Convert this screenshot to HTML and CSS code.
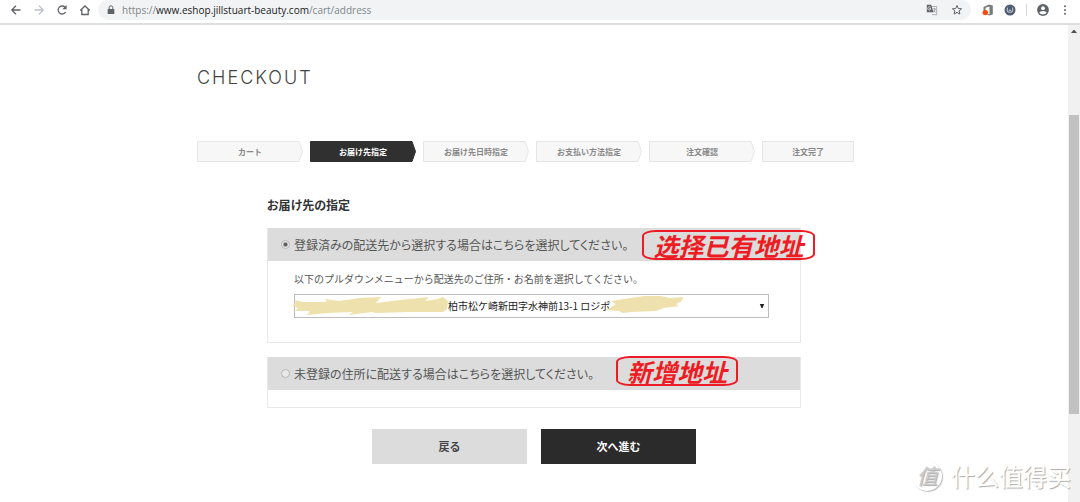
FILE: index.html
```html
<!DOCTYPE html>
<html lang="ja">
<head>
<meta charset="utf-8">
<title>CHECKOUT</title>
<link rel="stylesheet" href="styles.css">
</head>
<body>
<header class="toolbar">
  <nav class="nav-buttons">
    <button class="icon-button" type="button" aria-label="Back"><svg viewBox="0 0 12 12" width="12" height="12"><path d="M10.500 6H2M6 1.800 1.800 6 6 10.200" fill="none" stroke="#5f6368" stroke-width="1.300"/></svg></button>
    <button class="icon-button" type="button" aria-label="Forward"><svg viewBox="0 0 12 12" width="12" height="12"><path d="M1.500 6H10M6 1.800 10.200 6 6 10.200" fill="none" stroke="#bdc1c6" stroke-width="1.300"/></svg></button>
    <button class="icon-button" type="button" aria-label="Reload"><svg viewBox="0 0 12 12" width="12" height="12"><path d="M9.600 8A4 4 0 1 1 9 3.200" fill="none" stroke="#5f6368" stroke-width="1.300"/><path d="M10.600 1v4.300H6.300z" fill="#5f6368"/></svg></button>
    <button class="icon-button" type="button" aria-label="Home"><svg viewBox="0 0 12 12" width="12" height="12"><path d="M1.200 6.500 6 2l4.800 4.500M2.800 5.500v5h6.400v-5" fill="none" stroke="#5f6368" stroke-width="1.300"/></svg></button>
  </nav>
  <div class="address-bar">
    <svg class="lock" viewBox="0 0 8 10" width="8" height="10"><path d="M.7 4h6.600v5H.7z" fill="#5f6368"/><path d="M2.200 4V2.600a1.800 1.800 0 0 1 3.600 0V4" fill="none" stroke="#5f6368"/></svg>
    <span class="url">https://<b>www.eshop.jillstuart-beauty.com</b>/cart/address</span>
    <button class="icon-button" type="button" aria-label="Translate"><svg viewBox="0 0 12 12" width="12" height="12"><path d="M4.500 2.500h6.200v8.200H6" fill="#f5f6f7" stroke="#9a9da1" stroke-width=".8"/><path d="M.8.800h4.400l2.300 7.400H.8z" fill="#5f6368"/><path d="M5 4.500H3.200M4.600 3.200A1.700 1.700 0 1 0 5 5.100" fill="none" stroke="#e8eaed" stroke-width=".8"/><path d="M6.800 4.800h3M8.300 4v1M9.400 5Q9 7 7 8.500M7.500 6l2 2.500" fill="none" stroke="#85898d" stroke-width=".7"/></svg></button>
    <button class="icon-button" type="button" aria-label="Bookmark"><svg viewBox="0 0 12 12" width="12" height="12"><path d="m6 1.500 1.300 3 3.300.3-2.500 2.100.8 3.200L6 8.400l-2.900 1.700.8-3.200-2.500-2.100 3.300-.3z" fill="none" stroke="#5f6368"/></svg></button>
  </div>
  <div class="extensions">
    <button class="icon-button" type="button" aria-label="Office"><svg viewBox="0 0 12 12" width="12" height="12"><path d="M1.500 3 7 .5l3.800 1v9L7 11.500l-3-1.200h3.500V2.500L3.500 3.800v4.700l-2 1z" fill="#7a7a7a"/><circle cx="3.300" cy="8.600" r="2.700" fill="#fa4b0a"/></svg></button>
    <button class="icon-button" type="button" aria-label="Extension"><svg viewBox="0 0 12 12" width="12" height="12"><circle cx="6" cy="6" r="5.500" fill="#4e5d72"/><path d="M3.300 3.500v3.700l1 1h3.400l1-1V3.500M4.500 7.500 6 5.700l1.500 1.800" fill="none" stroke="#d4d9e0" stroke-width=".9"/></svg></button>
    <span class="divider"></span>
    <button class="icon-button" type="button" aria-label="Profile"><svg viewBox="0 0 12 12" width="12" height="12"><circle cx="6" cy="6" r="5.900" fill="#5f6368"/><circle cx="6" cy="4.200" r="1.900" fill="#fff"/><path d="M2.200 8.800Q3 7 6 7t3.800 1.800Q8.500 10.500 6 10.500T2.200 8.800z" fill="#fff"/></svg></button>
    <button class="icon-button" type="button" aria-label="Menu"><svg viewBox="0 0 12 12" width="12" height="12"><g fill="#5f6368"><circle cx="6" cy="2.200" r="1"/><circle cx="6" cy="6" r="1"/><circle cx="6" cy="9.800" r="1"/></g></svg></button>
  </div>
</header>
<div class="viewport">
  <main class="page">
    <h1 class="title">CHECKOUT</h1>
    <ol class="steps">
      <li class="step"><svg class="step-shape" viewBox="0 0 106 21" preserveAspectRatio="none"><path d="M.5.500h101.500l3.500 10-3.500 10H.5z"/></svg><span>カート</span></li>
      <li class="step current" aria-current="step"><svg class="step-shape" viewBox="0 0 106 21" preserveAspectRatio="none"><path d="M.5.500h101.500l3.500 10-3.500 10H.5z"/></svg><span>お届け先指定</span></li>
      <li class="step"><svg class="step-shape" viewBox="0 0 106 21" preserveAspectRatio="none"><path d="M.5.500h101.500l3.500 10-3.500 10H.5z"/></svg><span>お届け先日時指定</span></li>
      <li class="step"><svg class="step-shape" viewBox="0 0 106 21" preserveAspectRatio="none"><path d="M.5.500h101.500l3.500 10-3.500 10H.5z"/></svg><span>お支払い方法指定</span></li>
      <li class="step"><svg class="step-shape" viewBox="0 0 106 21" preserveAspectRatio="none"><path d="M.5.500h101.500l3.500 10-3.500 10H.5z"/></svg><span>注文確認</span></li>
      <li class="step last"><span>注文完了</span></li>
    </ol>
    <form class="delivery">
      <h2 class="subtitle">お届け先の指定</h2>
      <section class="panel">
        <div class="panel-head">
          <input class="radio" type="radio" name="dest" id="saved" checked>
          <label for="saved">登録済みの配送先から選択する場合はこちらを選択してください。</label>
          <strong class="mark mark-saved" lang="zh-CN">选择已有地址</strong>
        </div>
        <div class="panel-body">
          <label class="hint" for="address">以下のプルダウンメニューから配送先のご住所・お名前を選択してください。</label>
          <div class="select-wrap">
            <select class="select" id="address"><option>柏市松ケ崎新田字水神前13-1 ロジポ</option></select>
            <svg class="smudge smudge-start" viewBox="0 0 156 20" width="156" height="20"><path d="M0 10 4 6 2 4 12 6 35 6 33 3 47 5 68 2 89 1 84 7 108 4 137 1 133 5 146 3 151 1 156 5 155 13 151 16 118 16 84 17 80 16 57 19 61 16 36 17 15 19 18 15 3 15 6 12z" fill="#eee1ad"/></svg>
            <svg class="smudge smudge-end" viewBox="0 0 78 20" width="78" height="20"><path d="M0 15 10 9 5 6 18 4 38 1 55 1 64 3 77 2 76 6 70 9 73 11 58 13 50 16 26 17 17 18 13 16z" fill="#eee1ad"/></svg>
            <svg class="arrow" viewBox="0 0 6 6" width="6" height="6"><path d="M.8 1h4.400L3.500 5h-1z" fill="#222"/></svg>
          </div>
        </div>
      </section>
      <section class="panel">
        <div class="panel-head">
          <input class="radio" type="radio" name="dest" id="new">
          <label for="new">未登録の住所に配送する場合はこちらを選択してください。</label>
          <strong class="mark mark-new" lang="zh-CN">新增地址</strong>
        </div>
        <div class="panel-empty"></div>
      </section>
      <div class="actions">
        <button class="button" type="button">戻る</button>
        <button class="button primary" type="submit">次へ進む</button>
      </div>
    </form>
  </main>
  <div class="scrollbar">
    <svg viewBox="0 0 6 4" width="6" height="4"><path d="M0 4 2.500 1h1L6 4z" fill="#505050"/></svg>
    <div class="thumb"></div>
  </div>
</div>
<div class="watermark" lang="zh-CN"><span class="seal">值</span><span>什么值得买</span></div>
</body>
</html>
```
FILE: styles.css
```css
* { box-sizing: border-box; }
body {
  margin: 0;
  min-height: 100vh;
  display: flex;
  flex-direction: column;
  position: relative;
  background: #fff;
  color: #555;
  font-family: "Noto Sans", "Noto Sans CJK JP", sans-serif;
}
button, select { font-family: inherit; }
svg { display: block; }

.toolbar {
  display: flex;
  align-items: center;
  height: 25px;
  padding: 0 9px 4px 10px;
  border-bottom: 2px solid #dedede;
}
.nav-buttons { display: flex; gap: 11px; margin-right: 7px; }
.icon-button { padding: 0; border: 0; background: none; flex: none; }
.address-bar {
  flex: 1;
  display: flex;
  align-items: center;
  gap: 13px;
  height: 20px;
  padding: 0 8px 0 9px;
  border-radius: 10px;
  background: #f1f3f4;
}
.lock { flex: none; margin-right: -6px; }
.url {
  flex: 1;
  font: 10px/20px "Open Sans", sans-serif;
  color: #80868b;
  white-space: nowrap;
}
.url b { font-weight: 400; color: #202124; }
.extensions { display: flex; align-items: center; gap: 10px; padding-left: 11px; }
.divider { width: 1px; height: 12px; background: #d5d7da; }

.viewport { flex: 1; display: flex; }
.page { flex: 1; min-width: 0; padding: 40px 20px 20px; }
.title {
  max-width: 674px;
  margin: 0 auto;
  font: 300 18px/26px Inter, sans-serif;
  letter-spacing: 2px;
  color: #444;
}
.steps {
  display: flex;
  gap: 7px;
  max-width: 674px;
  margin: 50px auto 32px;
  padding: 0;
  list-style: none;
}
.step {
  display: grid;
  width: 106px;
  height: 21px;
  font: 700 8px/21px "Noto Sans CJK JP", sans-serif;
  text-align: center;
  color: #888;
}
.step > * { grid-area: 1 / 1; }
.step-shape { width: 100%; height: 21px; fill: #f7f7f7; stroke: #e5e5e5; }
.current { color: #fff; }
.current .step-shape { fill: #303030; stroke: #303030; }
.last { width: 92px; line-height: 19px; background: #f7f7f7; border: 1px solid #e5e5e5; }

.delivery { max-width: 534px; margin: 0 auto; }
.subtitle {
  margin: 0 0 12px;
  font: 700 12px/22px "Noto Sans CJK JP", sans-serif;
  font-feature-settings: "palt";
  color: #333;
}
.panel { margin-bottom: 14px; border: 1px solid #e8e8e8; border-top: 0; }
.panel-head {
  position: relative;
  display: flex;
  align-items: center;
  gap: 4px;
  height: 33px;
  padding-left: 13px;
  background: #dcdcdc;
  font: 12px/32px "Noto Sans CJK JP", sans-serif;
  font-feature-settings: "palt";
}
.radio {
  appearance: none;
  width: 9px;
  height: 9px;
  margin: 0;
  border: 1px solid #b5b5b5;
  border-radius: 50%;
  background: #e9e9e9;
}
.radio:checked { background: radial-gradient(circle, #555 0 1px, #ececec 3px); }
.mark {
  position: absolute;
  top: 2px;
  border: 2px solid #ed1c24;
  border-radius: 14px / 6px;
  font: italic 700 25px/26px "Noto Sans CJK SC", sans-serif;
  text-align: center;
  white-space: nowrap;
  color: #ed1c24;
}
.mark-saved { left: 374px; width: 173px; }
.mark-new { left: 348px; top: -1px; width: 122px; }
.panel-body { padding: 10px 31px 24px 26px; }
.hint { display: block; font: 10px/16px "Noto Sans CJK JP", sans-serif; }
.select-wrap { position: relative; margin-top: 7px; }
.select {
  appearance: none;
  display: block;
  width: 100%;
  height: 24px;
  padding: 0 20px 0 153px;
  border: 1px solid #bcbcbc;
  border-radius: 0;
  background: #fff;
  font: 10px/22px "Noto Sans CJK JP", sans-serif;
  color: #222;
}
.smudge { position: absolute; top: 2px; pointer-events: none; }
.smudge-start { left: -2px; }
.smudge-end { left: 312px; top: 1px; }
.arrow { position: absolute; right: 4px; top: 9px; pointer-events: none; }
.panel-empty { height: 17px; }
.actions { display: flex; justify-content: center; gap: 14px; margin-top: 21px; }
.button {
  width: 155px;
  height: 35px;
  padding: 0;
  border: 0;
  background: #dcdcdc;
  font: 700 11px/35px "Noto Sans CJK JP", sans-serif;
  color: #444;
}
.primary { background: #2b2b2b; color: #fff; }

.scrollbar {
  display: flex;
  flex-direction: column;
  align-items: center;
  width: 12px;
  padding-top: 4px;
  background: #f1f1f1;
}
.thumb { width: 10px; height: 299px; margin-top: 82px; background: #c1c1c1; }

.watermark {
  position: absolute;
  right: 9px;
  bottom: 10px;
  display: flex;
  align-items: center;
  gap: 9px;
  font: 24px/32px "Noto Sans CJK SC", sans-serif;
  color: #fff;
  text-shadow: 1px 1px 1px #aaa;
}
.seal {
  width: 30px;
  height: 30px;
  border-radius: 50%;
  box-shadow: 1px 1px 1px #bbb;
  font-size: 21px;
  line-height: 28px;
  font-style: italic;
  text-align: center;
  color: #ccc;
}
```
